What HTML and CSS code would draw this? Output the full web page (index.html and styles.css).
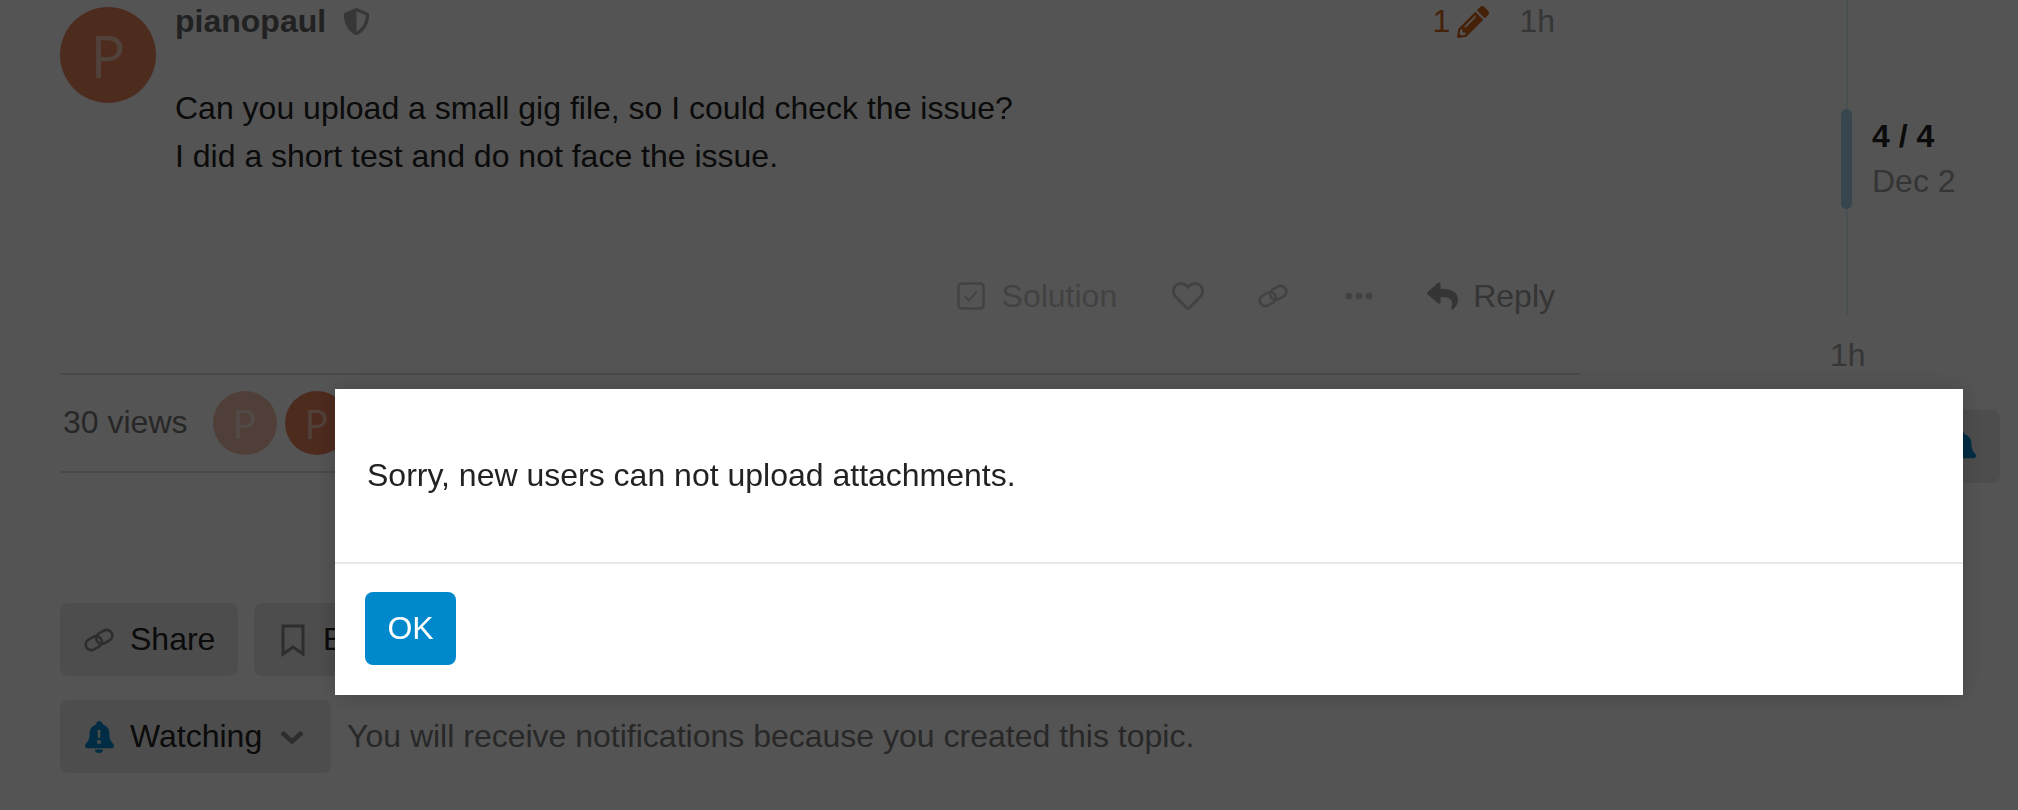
FILE: index.html
```html
<!DOCTYPE html>
<html lang="en">
<head>
    <meta charset="UTF-8">
    <title>Topic</title>
    <link rel="stylesheet" href="styles.css">
</head>
<body>
    <div class="page">
        <main class="topic">
            <article class="post">
                <div class="avatar avatar-post">P</div>
                <div class="post-main">
                    <div class="post-header">
                        <span class="username">pianopaul</span>
                        <svg class="icon shield" viewBox="0 0 512 512"><path d="M466.5 83.7l-192-80a48.15 48.15 0 0 0-36.9 0l-192 80C27.7 91.1 16 108.6 16 128c0 198.5 114.5 335.7 221.5 380.3 11.8 4.9 25.1 4.9 36.9 0C360.1 472.6 496 349.3 496 128c0-19.4-11.7-36.9-29.5-44.3zM256.1 446.3l-.1-381 175.9 73.3c-3.3 151.4-82.1 261.1-175.8 307.7z"/></svg>
                        <span class="edits">1
                            <svg class="icon pencil" viewBox="0 0 512 512"><path d="M497.9 142.1l-46.1 46.1c-4.7 4.7-12.3 4.7-17 0l-111-111c-4.7-4.7-4.7-12.3 0-17l46.1-46.1c18.7-18.7 49.1-18.7 67.9 0l60.1 60.1c18.8 18.7 18.8 49.1 0 67.9zM284.2 99.8L21.6 362.4.4 483.9c-2.9 16.4 11.4 30.6 27.8 27.8l121.5-21.3 262.6-262.6c4.7-4.7 4.7-12.3 0-17l-111-111c-4.8-4.7-12.4-4.7-17.1 0zM124.1 339.9c-5.5-5.5-5.5-14.3 0-19.8l154-154c5.5-5.5 14.3-5.5 19.8 0s5.5 14.3 0 19.8l-154 154c-5.5 5.5-14.3 5.5-19.8 0zM88 424h48v36.3l-64.5 11.3-31.1-31.1L51.7 376H88v48z"/></svg>
                        </span>
                        <span class="post-date">1h</span>
                    </div>
                    <div class="post-text">
                        <p>Can you upload a small gig file, so I could check the issue?</p>
                        <p>I did a short test and do not face the issue.</p>
                    </div>
                    <div class="post-actions">
                        <span class="action action-solution">
                            <svg class="icon check-box" viewBox="0 0 28 28"><rect x="1.5" y="1.5" width="25" height="25" rx="3"/><path d="M8 14.500l4 4L20 9.500"/></svg>
                            Solution
                        </span>
                        <svg class="icon heart" viewBox="0 0 512 512"><path d="M458.4 64.3C400.6 15.7 311.3 23 256 79.3 200.7 23 111.4 15.6 53.6 64.3-21.6 127.6-10.6 230.8 43 285.5l175.4 178.7c10 10.2 23.4 15.9 37.6 15.9 14.3 0 27.6-5.6 37.6-15.8L469 285.6c53.5-54.7 64.7-157.9-10.6-221.3zm-23.6 187.5L259.4 430.5c-2.4 2.4-4.4 2.4-6.8 0L77.2 251.8c-36.5-37.2-43.9-107.6 7.3-150.7 38.9-32.7 98.9-27.8 136.5 10.5l35 35.7 35-35.7c37.8-38.5 97.8-43.2 136.5-10.6 51.1 43.1 43.5 113.9 7.3 150.8z"/></svg>
                        <svg class="icon link" viewBox="0 0 32 24"><g transform="rotate(-30 16 12)"><rect x="0.500" y="6" width="18" height="12" rx="6"/><rect x="13.500" y="6" width="18" height="12" rx="6"/></g></svg>
                        <svg class="icon dots" viewBox="0 0 28 8"><circle cx="4" cy="4" r="3.5"/><circle cx="14" cy="4" r="3.5"/><circle cx="24" cy="4" r="3.5"/></svg>
                        <span class="action action-reply">
                            <svg class="icon reply" viewBox="0 0 512 512"><path d="M8.309 189.836L184.313 37.851C199.719 24.546 224 35.347 224 56.015v80.053c160.629 1.839 288 34.032 288 186.258 0 61.441-39.581 122.309-83.333 154.132-13.653 9.931-33.111-2.533-28.077-18.631 45.344-145.012-21.507-183.51-176.59-185.742V360c0 20.7-24.3 31.453-39.687 18.164l-176.004-152c-11.071-9.562-11.086-26.753 0-36.328z"/></svg>
                            Reply
                        </span>
                    </div>
                </div>
            </article>

            <div class="topic-map">
                <span class="views">30 views</span>
                <div class="avatar avatar-small avatar-faded">P</div>
                <div class="avatar avatar-small">P</div>
            </div>

            <div class="footer-buttons">
                <span class="btn btn-share">
                    <svg class="icon btn-link" viewBox="0 0 32 24"><g transform="rotate(-30 16 12)"><rect x="0.500" y="6" width="18" height="12" rx="6"/><rect x="13.500" y="6" width="18" height="12" rx="6"/></g></svg>
                    Share
                </span>
                <span class="btn">
                    <svg class="icon bookmark" viewBox="0 0 24 32"><path d="M2 2h20v28l-10-7-10 7z"/></svg>
                    Bookmark
                </span>
            </div>

            <div class="notifications">
                <span class="btn btn-watching">
                    <svg class="icon bell" viewBox="0 0 28 32"><path fill-rule="evenodd" d="M14 0c-1.500 0-2.600 1.200-2.600 2.600v1C6.900 4.700 4.600 8.400 4.600 12.600c0 6.400-2 8.400-3.800 10.300-.5.500-.8 1.100-.8 1.800 0 1.400 1.100 2.500 2.600 2.500h23.800c1.500 0 2.600-1.100 2.600-2.500 0-.7-.3-1.300-.8-1.800-1.800-1.900-3.800-3.900-3.800-10.300 0-4.200-2.300-7.900-6.800-9v-1C16.600 1.200 15.500 0 14 0zM12.500 9h3l-.5 8h-2zM14 19a2 2 0 1 1 0 4 2 2 0 0 1 0-4z"/><path d="M10 28.500h8a4 3.500 0 0 1-8 0z"/></svg>
                    Watching
                    <svg class="icon chevron" viewBox="0 0 24 14"><path d="M2 2.500l10 9 10-9"/></svg>
                </span>
                <span class="notify-text">You will receive notifications because you created this topic.</span>
            </div>
        </main>

        <aside class="timeline">
            <div class="track">
                <div class="rail rail-top"></div>
                <div class="handle-row">
                    <div class="handle"></div>
                    <div class="position">
                        <strong>4 / 4</strong>
                        <span>Dec 2</span>
                    </div>
                </div>
                <div class="rail rail-bottom"></div>
            </div>
            <div class="timeline-end">1h</div>
            <div class="btn bell-btn">
                <svg class="icon bell" viewBox="0 0 28 32"><path d="M14 0c-1.500 0-2.600 1.200-2.600 2.600v1C6.900 4.700 4.600 8.400 4.600 12.600c0 6.400-2 8.400-3.800 10.300-.5.500-.8 1.100-.8 1.800 0 1.400 1.100 2.500 2.600 2.500h23.800c1.500 0 2.600-1.100 2.600-2.500 0-.7-.3-1.300-.8-1.800-1.800-1.900-3.800-3.900-3.800-10.300 0-4.200-2.300-7.900-6.800-9v-1C16.600 1.200 15.500 0 14 0z"/></svg>
            </div>
        </aside>
    </div>

    <div class="backdrop"></div>

    <div class="modal">
        <div class="modal-body">Sorry, new users can not upload attachments.</div>
        <div class="modal-footer">
            <button class="btn-primary">OK</button>
        </div>
    </div>
</body>
</html>
```

FILE: styles.css
```css
* {
    box-sizing: border-box;
    margin: 0;
    padding: 0;
}

html, body {
    height: 810px;
    overflow: hidden;
}

body {
    font-family: "Liberation Sans", Arial, sans-serif;
    font-size: 32px;
    color: #222;
    background: #fff;
}

.page {
    display: flex;
    padding-left: 60px;
}

.topic {
    width: 1520px;
    flex-shrink: 0;
}

.icon {
    display: block;
    flex-shrink: 0;
    fill: currentColor;
    overflow: visible;
}

/* avatars */
.avatar {
    display: flex;
    align-items: center;
    justify-content: center;
    border-radius: 50%;
    background-color: #e8825a;
    color: rgba(255,255,255,0.55);
    font-family: "Open Sans", sans-serif;
    font-weight: 500;
    flex-shrink: 0;
}

.avatar-post {
    width: 96px;
    height: 96px;
    font-size: 58px;
    margin-top: 7px;
}

.avatar-small {
    width: 64px;
    height: 64px;
    font-size: 40px;
}

.avatar-faded {
    opacity: 0.5;
}

/* post */
.post {
    display: flex;
    gap: 19px;
    height: 375px;
    border-bottom: 2px solid #ddd;
}

.post-main {
    flex: 1;
    padding-right: 25px;
}

.post-header {
    display: flex;
    align-items: center;
    height: 43px;
}

.username {
    font-weight: 700;
    color: #666;
}

.shield {
    width: 27px;
    height: 27px;
    margin-left: 17px;
    color: #a8a8a8;
}

.edits {
    display: flex;
    align-items: center;
    gap: 7px;
    margin-left: auto;
    color: #d0651a;
}

.pencil {
    width: 32px;
    height: 32px;
}

.post-date {
    margin-left: 30px;
    color: #a5a5a5;
}

.post-text {
    margin-top: 41px;
    color: #222;
    line-height: 48px;
}

.post-actions {
    display: flex;
    align-items: center;
    justify-content: flex-end;
    margin-top: 95px;
    height: 42px;
    color: #c8c8c8;
}

.action {
    display: flex;
    align-items: center;
}

.action-solution {
    gap: 17px;
    margin-right: 55px;
}

.check-box {
    width: 28px;
    height: 28px;
    fill: none;
    stroke: currentColor;
    stroke-width: 2.5;
}

.check-box path {
    stroke-width: 1.8;
}

.heart {
    width: 32px;
    height: 32px;
    margin-right: 54px;
}

.link {
    width: 30px;
    height: 24px;
    margin-right: 57px;
    fill: none;
    stroke: currentColor;
    stroke-width: 2.8;
}

.dots {
    width: 28px;
    height: 8px;
    margin-right: 54px;
}

.action-reply {
    gap: 15px;
    color: #a0a0a0;
}

.reply {
    width: 31px;
    height: 32px;
}

/* views row */
.topic-map {
    display: flex;
    align-items: center;
    height: 98px;
    padding-left: 3px;
    border-bottom: 2px solid #ddd;
}

.views {
    margin-right: 25px;
    margin-bottom: 2px;
    color: #777;
}

.avatar-small + .avatar-small {
    margin-left: 8px;
}

/* footer */
.footer-buttons {
    display: flex;
    gap: 16px;
    margin-top: 130px;
}

.btn {
    display: inline-flex;
    align-items: center;
    height: 73px;
    padding: 0 24px;
    background-color: #e9e9e9;
    border-radius: 8px;
    color: #222;
    gap: 16px;
}

.btn-share {
    width: 178px;
    padding-right: 0;
}

.btn-link {
    width: 30px;
    height: 24px;
    fill: none;
    stroke: #888;
    stroke-width: 2.8;
}

.bookmark {
    width: 24px;
    height: 32px;
    margin: 0 2px 0 3px;
    fill: none;
    stroke: #888;
    stroke-width: 3;
}

.notifications {
    display: flex;
    align-items: center;
    gap: 16px;
    margin-top: 24px;
}

.btn-watching {
    width: 271px;
}

.btn-watching .bell {
    margin: 0 1px;
}

.bell {
    width: 28px;
    height: 32px;
    color: #0088cc;
}

.chevron {
    width: 24px;
    height: 14px;
    margin-left: 2px;
    fill: none;
    stroke: #888;
    stroke-width: 4.5;
}

.notify-text {
    color: #7a7a7a;
}

/* timeline */
.timeline {
    flex: 1;
    display: flex;
    flex-direction: column;
}

.track {
    padding-left: 261px;
}

.rail {
    width: 2px;
    margin-left: 5px;
    background-color: #e0eef5;
}

.rail-top {
    height: 109px;
}

.rail-bottom {
    height: 106px;
}

.handle-row {
    display: flex;
    height: 100px;
    gap: 20px;
}

.handle {
    width: 11px;
    height: 100px;
    border-radius: 6px;
    background-color: #0088cc;
    opacity: 0.35;
}

.position {
    display: flex;
    flex-direction: column;
    padding-top: 5px;
    line-height: 45px;
    color: #a0a0a0;
}

.position strong {
    color: #222;
}

.timeline-end {
    margin-top: 22px;
    padding-left: 250px;
    color: #a5a5a5;
}

.bell-btn {
    align-self: flex-end;
    margin: 36px 18px 0 0;
    width: 77px;
    padding: 0 25px 0 24px;
}

/* modal */
.backdrop {
    position: fixed;
    inset: 0;
    background-color: rgba(0,0,0,0.67);
}

.modal {
    position: fixed;
    left: 335px;
    top: 389px;
    width: 1628px;
    height: 306px;
    background-color: #fff;
    box-shadow: 0 0 24px rgba(0,0,0,0.2);
}

.modal-body {
    display: flex;
    align-items: center;
    height: 175px;
    padding: 0 32px;
    border-bottom: 2px solid #e9e9e9;
    color: #222;
}

.modal-footer {
    padding: 28px 30px;
}

.btn-primary {
    width: 91px;
    height: 73px;
    border: none;
    border-radius: 8px;
    background-color: #0088cc;
    color: #fff;
    font-family: inherit;
    font-size: 32px;
}
```
